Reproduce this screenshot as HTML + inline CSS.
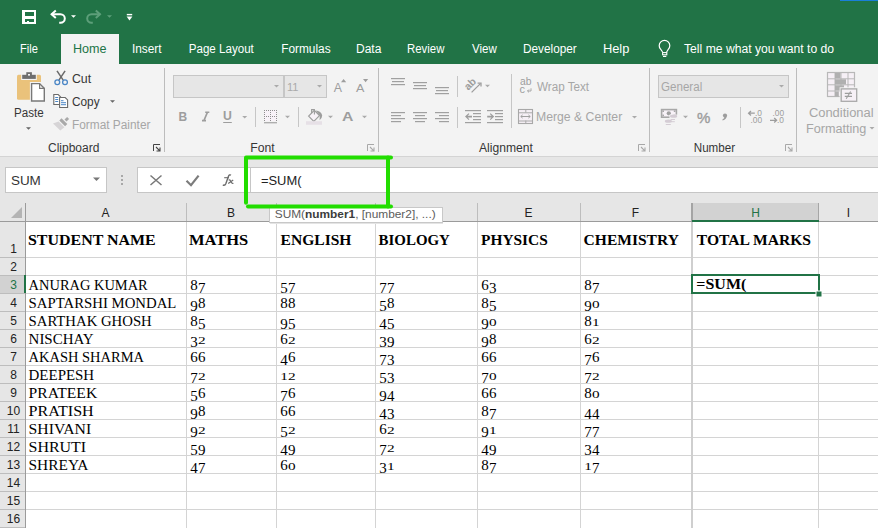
<!DOCTYPE html>
<html><head><meta charset="utf-8"><title>Excel</title>
<style>
*{margin:0;padding:0}
html,body{width:878px;height:528px;overflow:hidden;background:#e6e6e6;font-family:"Liberation Sans",sans-serif}
text{white-space:pre}
</style></head><body>
<svg width="878" height="528" viewBox="0 0 878 528" style="position:absolute;left:0;top:0">
<rect x="0" y="0" width="878" height="64" fill="#217346" />
<rect x="840" y="0" width="38" height="1" fill="#1a7fd8" />
<rect x="61" y="34" width="58" height="30" fill="#f3f3f3" />
<text id="tab_File" x="19.96" y="53" font-family='"Liberation Sans", sans-serif' font-size="12" fill="#ffffff" font-weight="normal" text-anchor="start" textLength="17.89" lengthAdjust="spacingAndGlyphs" >File</text>
<text id="tab_Home" x="72.93" y="53" font-family='"Liberation Sans", sans-serif' font-size="12" fill="#217346" font-weight="normal" text-anchor="start" textLength="33.56" lengthAdjust="spacingAndGlyphs" >Home</text>
<text id="tab_Insert" x="132.02" y="53" font-family='"Liberation Sans", sans-serif' font-size="12" fill="#ffffff" font-weight="normal" text-anchor="start" textLength="29.55" lengthAdjust="spacingAndGlyphs" >Insert</text>
<text id="tab_Page" x="188.78" y="53" font-family='"Liberation Sans", sans-serif' font-size="12" fill="#ffffff" font-weight="normal" text-anchor="start" textLength="65.02" lengthAdjust="spacingAndGlyphs" >Page Layout</text>
<text id="tab_Formulas" x="281.18" y="53" font-family='"Liberation Sans", sans-serif' font-size="12" fill="#ffffff" font-weight="normal" text-anchor="start" textLength="49.42" lengthAdjust="spacingAndGlyphs" >Formulas</text>
<text id="tab_Data" x="356.00" y="53" font-family='"Liberation Sans", sans-serif' font-size="12" fill="#ffffff" font-weight="normal" text-anchor="start" textLength="25.36" lengthAdjust="spacingAndGlyphs" >Data</text>
<text id="tab_Review" x="407.05" y="53" font-family='"Liberation Sans", sans-serif' font-size="12" fill="#ffffff" font-weight="normal" text-anchor="start" textLength="37.34" lengthAdjust="spacingAndGlyphs" >Review</text>
<text id="tab_View" x="472.00" y="53" font-family='"Liberation Sans", sans-serif' font-size="12" fill="#ffffff" font-weight="normal" text-anchor="start" textLength="24.80" lengthAdjust="spacingAndGlyphs" >View</text>
<text id="tab_Developer" x="523.02" y="53" font-family='"Liberation Sans", sans-serif' font-size="12" fill="#ffffff" font-weight="normal" text-anchor="start" textLength="53.69" lengthAdjust="spacingAndGlyphs" >Developer</text>
<text id="tab_Help" x="602.93" y="53" font-family='"Liberation Sans", sans-serif' font-size="12" fill="#ffffff" font-weight="normal" text-anchor="start" textLength="26.45" lengthAdjust="spacingAndGlyphs" >Help</text>
<text id="tab_Tell" x="684.00" y="53" font-family='"Liberation Sans", sans-serif' font-size="12" fill="#ffffff" font-weight="normal" text-anchor="start" textLength="150.08" lengthAdjust="spacingAndGlyphs" >Tell me what you want to do</text>
<rect x="22" y="10" width="14" height="14" fill="#ffffff" />
<rect x="25" y="12" width="9" height="4" fill="#217346" />
<rect x="25" y="19" width="9" height="3" fill="#217346" />
<rect x="27" y="21" width="2" height="1" fill="#ffffff" />
<path d="M51.5 14.2 H60.5 A4.3 4.3 0 0 1 60.5 22.8 H59.2" fill="none" stroke="#fff" stroke-width="2" />
<path d="M55.8 10.4 L51.6 14.2 L55.8 18" fill="none" stroke="#fff" stroke-width="2" />
<path d="M71 15.2H76L73.5 17.7Z" fill="#fff" />
<path d="M100.3 14.2 H91.5 A4.3 4.3 0 0 0 91.5 22.8 H92.8" fill="none" stroke="#5d9f7a" stroke-width="2" />
<path d="M95.8 10.4 L100 14.2 L95.8 18" fill="none" stroke="#5d9f7a" stroke-width="2" />
<path d="M107 15.2H112L109.5 17.7Z" fill="#5d9f7a" />
<rect x="126.8" y="13.9" width="5.4" height="1.4" fill="#fff" />
<path d="M126.6 16.4H132.4L129.5 20.4Z" fill="#fff" />
<path d="M662.6 52 L660.6 49.2 A5.3 5.3 0 1 1 668.4 49.2 L666.6 52" fill="none" stroke="#fff" stroke-width="1.2" />
<rect x="662.6" y="52.6" width="4.2" height="2.2" fill="none" stroke="#fff" stroke-width="1.1" />
<rect x="663" y="55.9" width="3.3" height="1.1" fill="#fff" />
<rect x="0" y="64" width="878" height="92" fill="#f3f3f3" />
<rect x="0" y="156" width="878" height="1" fill="#d4d4d4" />
<rect x="164" y="68" width="1" height="84" fill="#bcbcbc" />
<rect x="378" y="68" width="1" height="84" fill="#bcbcbc" />
<rect x="649" y="68" width="1" height="84" fill="#bcbcbc" />
<rect x="796" y="68" width="1" height="84" fill="#bcbcbc" />
<text id="g_clip" x="48.00" y="152" font-family='"Liberation Sans", sans-serif' font-size="12" fill="#363636" font-weight="normal" text-anchor="start" textLength="51.38" lengthAdjust="spacingAndGlyphs" >Clipboard</text>
<text id="g_font" x="250.34" y="152" font-family='"Liberation Sans", sans-serif' font-size="12" fill="#363636" font-weight="normal" text-anchor="start" textLength="24.38" lengthAdjust="spacingAndGlyphs" >Font</text>
<text id="g_align" x="479.00" y="152" font-family='"Liberation Sans", sans-serif' font-size="12" fill="#363636" font-weight="normal" text-anchor="start" textLength="53.88" lengthAdjust="spacingAndGlyphs" >Alignment</text>
<text id="g_num" x="693.79" y="152" font-family='"Liberation Sans", sans-serif' font-size="12" fill="#363636" font-weight="normal" text-anchor="start" textLength="41.30" lengthAdjust="spacingAndGlyphs" >Number</text>
<path d="M153.5 151V144.5H160" fill="none" stroke="#444" stroke-width="1" />
<path d="M156 147L159.8 150.8M160 147.5V151H156.5" fill="none" stroke="#444" stroke-width="1.1" />
<path d="M367.5 151V144.5H374" fill="none" stroke="#a8a8a8" stroke-width="1" />
<path d="M370 147L373.8 150.8M374 147.5V151H370.5" fill="none" stroke="#a8a8a8" stroke-width="1.1" />
<path d="M638.5 151V144.5H645" fill="none" stroke="#a8a8a8" stroke-width="1" />
<path d="M641 147L644.8 150.8M645 147.5V151H641.5" fill="none" stroke="#a8a8a8" stroke-width="1.1" />
<path d="M785.5 151V144.5H792" fill="none" stroke="#a8a8a8" stroke-width="1" />
<path d="M788 147L791.8 150.8M792 147.5V151H788.5" fill="none" stroke="#a8a8a8" stroke-width="1.1" />
<path d="M18.5 74.8H39.5Q41 74.8 41 76.3V98.3Q41 99.8 39.5 99.8H18.5Q17 99.8 17 98.3V76.3Q17 74.8 18.5 74.8Z" fill="#eac27b" />
<rect x="21.2" y="73.8" width="15.6" height="6.2" fill="#f3f3f3" />
<rect x="22.2" y="74.8" width="13.6" height="4.1" fill="#6e6e6e" />
<rect x="26.3" y="72.2" width="5.6" height="3" fill="#6e6e6e" />
<rect x="28" y="74" width="2" height="1.6" fill="#f3f3f3" />
<rect x="29.9" y="82" width="16.1" height="20.7" fill="#f3f3f3" />
<path d="M31.6 83.6H39.6L44.3 88.4V101H31.6Z" fill="#fff" stroke="#787878" stroke-width="1.4" />
<path d="M39.6 83.6V88.4H44.3" fill="none" stroke="#787878" stroke-width="1.2" />
<text id="paste" x="14.03" y="117" font-family='"Liberation Sans", sans-serif' font-size="12" fill="#363636" font-weight="normal" text-anchor="start" textLength="29.63" lengthAdjust="spacingAndGlyphs" >Paste</text>
<path d="M26 127.3H31L28.5 129.8Z" fill="#666" />
<path d="M57 70.8 L63.2 80.2 M65.1 70.8 L58.9 80.2" fill="none" stroke="#6a6a6a" stroke-width="1.5" />
<circle cx="57.3" cy="82.2" r="2.4" fill="none" stroke="#4a86c6" stroke-width="1.3"/>
<circle cx="65" cy="82.2" r="2.4" fill="none" stroke="#4a86c6" stroke-width="1.3"/>
<text id="cut" x="71.92" y="83" font-family='"Liberation Sans", sans-serif' font-size="12" fill="#363636" font-weight="normal" text-anchor="start" textLength="19.26" lengthAdjust="spacingAndGlyphs" >Cut</text>
<path d="M53.8 94.5H58.2L60.6 96.9V104.5H53.8Z" fill="#fff" stroke="#6a6a6a" stroke-width="1.1" />
<rect x="55.2" y="97" width="3" height="1" fill="#4a86c6" />
<rect x="55.2" y="99" width="3" height="1" fill="#4a86c6" />
<rect x="55.2" y="101" width="3" height="1" fill="#4a86c6" />
<path d="M59.6 97.5H65.2L67.6 99.9V107.5H59.6Z" fill="#fff" stroke="#6a6a6a" stroke-width="1.1" />
<rect x="61" y="100.2" width="2.5" height="1" fill="#4a86c6" />
<rect x="61" y="102.2" width="5" height="1" fill="#4a86c6" />
<rect x="61" y="104.2" width="5" height="1" fill="#4a86c6" />
<text id="copy" x="71.94" y="105.5" font-family='"Liberation Sans", sans-serif' font-size="12" fill="#363636" font-weight="normal" text-anchor="start" textLength="27.64" lengthAdjust="spacingAndGlyphs" >Copy</text>
<path d="M110 100.2H115L112.5 102.7Z" fill="#666" />
<path d="M67.1 117 L69.1 119 L66.5 121.6 L64.5 119.6 Z" fill="#a9a9a9" />
<path d="M59.3 120.4 L61.5 118.2 L67.3 124 L65.1 126.2 Z" fill="#a9a9a9" />
<path d="M53 123.4 L58.6 121.4 L64.4 127.2 L60.3 130.6 Z" fill="#d6d4d6" />
<text id="fp" x="72.01" y="128.6" font-family='"Liberation Sans", sans-serif' font-size="12" fill="#a6a6a6" font-weight="normal" text-anchor="start" textLength="78.42" lengthAdjust="spacingAndGlyphs" >Format Painter</text>
<rect x="173.5" y="75.5" width="110" height="22" fill="#e6e6e6" stroke="#c6c6c6" stroke-width="1" />
<rect x="283.5" y="75.5" width="43" height="22" fill="#e6e6e6" stroke="#c6c6c6" stroke-width="1" />
<rect x="283.5" y="76" width="1.5" height="21" fill="#c6c6c6" />
<path d="M274 85H279L276.5 87.5Z" fill="#aaa" />
<path d="M317 85H322L319.5 87.5Z" fill="#aaa" />
<text id="fsz" x="286.91" y="90.5" font-family='"Liberation Sans", sans-serif' font-size="11.5" fill="#aaa" font-weight="normal" text-anchor="start" textLength="11.52" lengthAdjust="spacingAndGlyphs" >11</text>
<text id="growA" x="333.82" y="92" font-family='"Liberation Sans", sans-serif' font-size="13.7" fill="#9d9d9d" font-weight="normal" text-anchor="start" textLength="8.24" lengthAdjust="spacingAndGlyphs" >A</text>
<path d="M341 82.2H346.2L343.6 79Z" fill="#9d9d9d" />
<text id="shrinkA" x="356.00" y="92" font-family='"Liberation Sans", sans-serif' font-size="11" fill="#9d9d9d" font-weight="normal" text-anchor="start" textLength="8.39" lengthAdjust="spacingAndGlyphs" >A</text>
<path d="M363 79H368.2L365.6 82.2Z" fill="#9d9d9d" />
<text id="boldB" x="178.56" y="121" font-family='"Liberation Sans", sans-serif' font-size="12.5" fill="#9d9d9d" font-weight="bold" text-anchor="start" textLength="8.67" lengthAdjust="spacingAndGlyphs" >B</text>
<path d="M205.2 112.2H209.3M202 120.6H206M207.4 112.4L204 120.4" fill="none" stroke="#9d9d9d" stroke-width="1.6" />
<text id="ulU" x="222.99" y="120.2" font-family='"Liberation Sans", sans-serif' font-size="12" fill="#9d9d9d" font-weight="bold" text-anchor="start" textLength="8.84" lengthAdjust="spacingAndGlyphs" >U</text>
<rect x="223.2" y="122" width="8.6" height="1" fill="#9d9d9d" />
<path d="M242.2 116H247.2L244.7 118.5Z" fill="#aaa" />
<rect x="255" y="107" width="1" height="20" fill="#c6c6c6" />
<rect x="264" y="110" width="13" height="11" fill="#f8f2f8" />
<rect x="264" y="110" width="1" height="1" fill="#8e8e8e" />
<rect x="264" y="112" width="1" height="1" fill="#8e8e8e" />
<rect x="264" y="114" width="1" height="1" fill="#8e8e8e" />
<rect x="264" y="116" width="1" height="1" fill="#8e8e8e" />
<rect x="264" y="118" width="1" height="1" fill="#8e8e8e" />
<rect x="264" y="120" width="1" height="1" fill="#8e8e8e" />
<rect x="266" y="110" width="1" height="1" fill="#8e8e8e" />
<rect x="266" y="116" width="1" height="1" fill="#8e8e8e" />
<rect x="268" y="110" width="1" height="1" fill="#8e8e8e" />
<rect x="268" y="116" width="1" height="1" fill="#8e8e8e" />
<rect x="270" y="110" width="1" height="1" fill="#8e8e8e" />
<rect x="270" y="112" width="1" height="1" fill="#8e8e8e" />
<rect x="270" y="114" width="1" height="1" fill="#8e8e8e" />
<rect x="270" y="116" width="1" height="1" fill="#8e8e8e" />
<rect x="270" y="118" width="1" height="1" fill="#8e8e8e" />
<rect x="270" y="120" width="1" height="1" fill="#8e8e8e" />
<rect x="272" y="110" width="1" height="1" fill="#8e8e8e" />
<rect x="272" y="116" width="1" height="1" fill="#8e8e8e" />
<rect x="274" y="110" width="1" height="1" fill="#8e8e8e" />
<rect x="274" y="116" width="1" height="1" fill="#8e8e8e" />
<rect x="276" y="110" width="1" height="1" fill="#8e8e8e" />
<rect x="276" y="112" width="1" height="1" fill="#8e8e8e" />
<rect x="276" y="114" width="1" height="1" fill="#8e8e8e" />
<rect x="276" y="116" width="1" height="1" fill="#8e8e8e" />
<rect x="276" y="118" width="1" height="1" fill="#8e8e8e" />
<rect x="276" y="120" width="1" height="1" fill="#8e8e8e" />
<rect x="264" y="122.2" width="13" height="1.1" fill="#9d9d9d" />
<path d="M285 115.8H290L287.5 118.3Z" fill="#aaa" />
<rect x="298" y="107" width="1" height="20" fill="#c6c6c6" />
<path d="M308.6 116.1 L314.3 110.4 L319.5 115.6 L313.8 121.3 Z" fill="#f8f2f8" stroke="#9d9d9d" stroke-width="1.2" />
<path d="M311.6 113.2 V109.6 H314.4 V114.6" fill="none" stroke="#9d9d9d" stroke-width="1.1" />
<path d="M315.6 110.6 Q321.3 111.2 322.2 115.4 Q322.2 118 319.6 120.2 L319.8 115.6 Z" fill="#9d9d9d" />
<rect x="306" y="121.2" width="16" height="3.6" fill="#e6e0e6" />
<path d="M328 115.8H333L330.5 118.3Z" fill="#aaa" />
<text id="fcA" x="341.96" y="121" font-family='"Liberation Sans", sans-serif' font-size="13.6" fill="#9d9d9d" font-weight="bold" text-anchor="start" textLength="11.40" lengthAdjust="spacingAndGlyphs" >A</text>
<path d="M362 115.8H367L364.5 118.3Z" fill="#aaa" />
<rect x="391" y="78" width="14" height="1.2" fill="#a0a0a0" />
<rect x="392" y="81" width="12" height="1.2" fill="#a0a0a0" />
<rect x="391" y="84" width="14" height="1.2" fill="#a0a0a0" />
<rect x="413" y="82" width="14" height="1.2" fill="#a0a0a0" />
<rect x="414" y="85" width="12" height="1.2" fill="#a0a0a0" />
<rect x="413" y="88" width="14" height="1.2" fill="#a0a0a0" />
<rect x="435" y="87" width="14" height="1.2" fill="#a0a0a0" />
<rect x="436" y="90" width="12" height="1.2" fill="#a0a0a0" />
<rect x="435" y="93" width="14" height="1.2" fill="#a0a0a0" />
<rect x="391" y="112" width="14" height="1.2" fill="#a0a0a0" />
<rect x="413" y="112" width="14" height="1.2" fill="#a0a0a0" />
<rect x="435" y="112" width="14" height="1.2" fill="#a0a0a0" />
<rect x="391" y="115" width="10" height="1.2" fill="#a0a0a0" />
<rect x="415" y="115" width="10" height="1.2" fill="#a0a0a0" />
<rect x="439" y="115" width="10" height="1.2" fill="#a0a0a0" />
<rect x="391" y="118" width="14" height="1.2" fill="#a0a0a0" />
<rect x="413" y="118" width="14" height="1.2" fill="#a0a0a0" />
<rect x="435" y="118" width="14" height="1.2" fill="#a0a0a0" />
<rect x="391" y="121" width="10" height="1.2" fill="#a0a0a0" />
<rect x="415" y="121" width="10" height="1.2" fill="#a0a0a0" />
<rect x="439" y="121" width="10" height="1.2" fill="#a0a0a0" />
<rect x="457" y="76" width="1" height="21" fill="#c6c6c6" />
<rect x="457" y="107" width="1" height="21" fill="#c6c6c6" />
<text x="0" y="0" font-family='"Liberation Sans", sans-serif' font-size="10.5" font-weight="bold" fill="#9d9d9d" transform="translate(468.2 90.8) rotate(-45)">ab</text>
<path d="M471.6 92.4 L480.4 83.6" fill="none" stroke="#9d9d9d" stroke-width="1.3" />
<path d="M477.6 83.1 H481 V86.4" fill="none" stroke="#9d9d9d" stroke-width="1.3" />
<path d="M485 84.8H490L487.5 87.3Z" fill="#aaa" />
<rect x="465" y="110" width="16" height="1.2" fill="#a0a0a0" />
<rect x="465" y="122" width="16" height="1.2" fill="#a0a0a0" />
<rect x="473" y="113" width="8" height="1.2" fill="#a0a0a0" />
<rect x="473" y="116" width="8" height="1.2" fill="#a0a0a0" />
<rect x="473" y="119" width="8" height="1.2" fill="#a0a0a0" />
<path d="M465 116.6 L468.6 113.2 L469.4 114 L467.6 115.7 H472 V117.5 H467.6 L469.4 119.2 L468.6 120 Z" fill="#9d9d9d" />
<rect x="487" y="110" width="16" height="1.2" fill="#a0a0a0" />
<rect x="487" y="122" width="16" height="1.2" fill="#a0a0a0" />
<rect x="495" y="113" width="8" height="1.2" fill="#a0a0a0" />
<rect x="495" y="116" width="8" height="1.2" fill="#a0a0a0" />
<rect x="495" y="119" width="8" height="1.2" fill="#a0a0a0" />
<path d="M494.2 116.6 L490.6 113.2 L489.8 114 L491.6 115.7 H487.2 V117.5 H491.6 L489.8 119.2 L490.6 120 Z" fill="#9d9d9d" />
<rect x="511" y="74" width="1" height="54" fill="#c6c6c6" />
<text id="t1" x="520.00" y="85.2" font-family='"Liberation Sans", sans-serif' font-size="10.3" fill="#9d9d9d" font-weight="normal" text-anchor="start" >ab</text>
<text id="t2" x="519.60" y="93" font-family='"Liberation Sans", sans-serif' font-size="11" fill="#9d9d9d" font-weight="normal" text-anchor="start" >c</text>
<path d="M531 88.3 V91 H527.5 M529 89.5 L527.5 91 L529 92.4" fill="none" stroke="#a0a0a0" stroke-width="0.9" />
<text id="wrap" x="537.00" y="90.7" font-family='"Liberation Sans", sans-serif' font-size="12" fill="#a6a6a6" font-weight="normal" text-anchor="start" textLength="52.09" lengthAdjust="spacingAndGlyphs" >Wrap Text</text>
<rect x="518.5" y="109.5" width="14" height="14" fill="#f6f0f6" stroke="#a8a8a8" stroke-width="1.1" />
<rect x="519" y="112.3" width="13" height="1" fill="#a8a8a8" />
<rect x="519" y="120.5" width="13" height="1" fill="#a8a8a8" />
<rect x="525.3" y="110" width="1" height="2.5" fill="#a8a8a8" />
<rect x="525.3" y="120.5" width="1" height="2.5" fill="#a8a8a8" />
<path d="M520.8 116.5 H530.2 M522.6 114.9 L520.8 116.5 L522.6 118.1 M528.4 114.9 L530.2 116.5 L528.4 118.1" fill="none" stroke="#a0a0a0" stroke-width="1" />
<text id="merge" x="535.98" y="121.3" font-family='"Liberation Sans", sans-serif' font-size="12" fill="#a6a6a6" font-weight="normal" text-anchor="start" textLength="86.27" lengthAdjust="spacingAndGlyphs" >Merge &amp; Center</text>
<path d="M632 116H637L634.5 118.5Z" fill="#aaa" />
<rect x="658.5" y="75.5" width="130" height="22" fill="#e6e6e6" stroke="#c6c6c6" stroke-width="1" />
<text id="general" x="661.04" y="90.5" font-family='"Liberation Sans", sans-serif' font-size="12" fill="#a6a6a6" font-weight="normal" text-anchor="start" textLength="41.19" lengthAdjust="spacingAndGlyphs" >General</text>
<path d="M779 85H784L781.5 87.5Z" fill="#aaa" />
<rect x="661.6" y="109.6" width="14.8" height="7.6" fill="#f8f2f8" stroke="#a8a8a8" stroke-width="1.6" />
<rect x="662.4000000000001" y="110.4" width="1.6" height="1.6" fill="#a8a8a8" />
<rect x="673.8000000000001" y="110.4" width="1.6" height="1.6" fill="#a8a8a8" />
<rect x="662.4000000000001" y="114.60000000000001" width="1.6" height="1.6" fill="#a8a8a8" />
<rect x="673.8000000000001" y="114.60000000000001" width="1.6" height="1.6" fill="#a8a8a8" />
<circle cx="668.8" cy="113.3" r="2.1" fill="#a0a0a0"/>
<rect x="669.5" y="114.6" width="8.5" height="10" fill="#f3f3f3" />
<ellipse cx="673.6" cy="116.2" rx="3.6" ry="1.6" fill="#d4ccd4"/>
<rect x="670.6" y="119" width="4.4" height="1" fill="#d4ccd4" />
<rect x="671.2" y="121.2" width="3.6" height="1" fill="#d4ccd4" />
<ellipse cx="668.4" cy="121.2" rx="3.6" ry="1.6" fill="#d4ccd4"/>
<rect x="665.8" y="124" width="5" height="1" fill="#d4ccd4" />
<path d="M683 115.8H688L685.5 118.3Z" fill="#aaa" />
<text id="pct" x="696.92" y="123" font-family='"Liberation Sans", sans-serif' font-size="15.5" fill="#9d9d9d" font-weight="normal" text-anchor="start" textLength="13.37" lengthAdjust="spacingAndGlyphs" stroke="#9d9d9d" stroke-width="0.4">%</text>
<circle cx="725" cy="115.6" r="2.1" fill="#9d9d9d"/>
<path d="M726.6 116.2 Q726.8 119 722.6 120.4 L722.4 119.6 Q724.6 118.6 724.6 116.6 Z" fill="#9d9d9d" />
<rect x="740" y="107" width="1" height="21" fill="#c6c6c6" />
<text id="t3" x="755.00" y="115.8" font-family='"Liberation Sans", sans-serif' font-size="8.4" fill="#9d9d9d" font-weight="normal" text-anchor="start" >.0</text>
<text id="t4" x="750.50" y="122.8" font-family='"Liberation Sans", sans-serif' font-size="8.4" fill="#9d9d9d" font-weight="normal" text-anchor="start" >.00</text>
<path d="M748.5 113.2 H754.8 M751 111 L748.6 113.2 L751 115.4" fill="none" stroke="#9d9d9d" stroke-width="1.3" />
<text id="t5" x="772.50" y="115.8" font-family='"Liberation Sans", sans-serif' font-size="8.4" fill="#9d9d9d" font-weight="normal" text-anchor="start" >.00</text>
<text id="t6" x="777.00" y="122.8" font-family='"Liberation Sans", sans-serif' font-size="8.4" fill="#9d9d9d" font-weight="normal" text-anchor="start" >.0</text>
<path d="M770 120.3 H776.5 M774.2 118.1 L776.6 120.3 L774.2 122.5" fill="none" stroke="#9d9d9d" stroke-width="1.3" />
<rect x="827.5" y="72.5" width="27" height="24" fill="#f6f0f6" stroke="#b8b8b8" stroke-width="1.2" />
<rect x="834.5" y="72.5" width="1" height="24.0" fill="#b8b8b8" />
<rect x="840.5" y="72.5" width="1" height="24.0" fill="#b8b8b8" />
<rect x="847.5" y="72.5" width="1" height="24.0" fill="#b8b8b8" />
<rect x="827.5" y="78.3" width="27.0" height="1" fill="#b8b8b8" />
<rect x="827.5" y="84.3" width="27.0" height="1" fill="#b8b8b8" />
<rect x="827.5" y="90.5" width="27.0" height="1" fill="#b8b8b8" />
<rect x="835" y="73" width="5.5" height="5.3" fill="#b0b0b0" />
<rect x="835" y="79.3" width="11" height="5" fill="#b0b0b0" />
<rect x="835" y="85.3" width="9" height="5.2" fill="#b0b0b0" />
<rect x="835" y="91.5" width="3.8" height="4.8" fill="#b0b0b0" />
<rect x="839.6" y="87.3" width="18.6" height="15.4" fill="#f3f3f3" />
<rect x="841.2" y="88.9" width="15.5" height="12.4" fill="#f6f0f6" stroke="#a8a8a8" stroke-width="1.3" />
<path d="M844.8 93.4 H852 M844.8 96.4 H852 M850.6 91.5 L846.2 98.7" fill="none" stroke="#9d9d9d" stroke-width="1.1" />
<text id="cond" x="808.92" y="116.7" font-family='"Liberation Sans", sans-serif' font-size="12" fill="#a6a6a6" font-weight="normal" text-anchor="start" textLength="64.68" lengthAdjust="spacingAndGlyphs" >Conditional</text>
<text id="fmtg" x="805.95" y="132.7" font-family='"Liberation Sans", sans-serif' font-size="12" fill="#a6a6a6" font-weight="normal" text-anchor="start" textLength="60.43" lengthAdjust="spacingAndGlyphs" >Formatting</text>
<path d="M869.5 127H874.5L872.0 129.5Z" fill="#aaa" />
<rect x="0" y="157" width="878" height="46" fill="#e6e6e6" />
<rect x="5.5" y="167.5" width="101" height="25" fill="#fff" stroke="#c6c6c6" stroke-width="1" />
<text id="namebox" x="10.92" y="184.7" font-family='"Liberation Sans", sans-serif' font-size="12.5" fill="#333" font-weight="normal" text-anchor="start" textLength="29.92" lengthAdjust="spacingAndGlyphs" >SUM</text>
<path d="M93 177.5H100L96.5 181.0Z" fill="#777" />
<rect x="121" y="175" width="2" height="2" fill="#a8a8a8" />
<rect x="121" y="179" width="2" height="2" fill="#a8a8a8" />
<rect x="121" y="183" width="2" height="2" fill="#a8a8a8" />
<rect x="137.5" y="167.5" width="114" height="25" fill="#fff" stroke="#c6c6c6" stroke-width="1" />
<path d="M150.5 175.5 L161.5 185 M161.5 175.5 L150.5 185" fill="none" stroke="#787878" stroke-width="1.5" />
<path d="M186.5 180.8 L191 185.2 L198.6 175.6" fill="none" stroke="#7c7c7c" stroke-width="2.2" />
<path d="M231 175.2 Q229.2 174.2 228.4 176.4 L225.8 183.8 Q225 185.8 222.8 185" fill="none" stroke="#6c6c6c" stroke-width="1.4" />
<path d="M224.2 177.7 H229" fill="none" stroke="#6c6c6c" stroke-width="1.1" />
<path d="M228.6 180 Q230 179.6 230.6 181 L231.4 182.6 Q232 183.8 233.4 183.2 M233.2 180 L228.2 183.6" fill="none" stroke="#6c6c6c" stroke-width="1.2" />
<rect x="250.5" y="167.5" width="640" height="25" fill="#fff" stroke="#c6c6c6" stroke-width="1" />
<text id="fx" x="260.96" y="184.5" font-family='"Liberation Sans", sans-serif' font-size="12.4" fill="#222" font-weight="normal" text-anchor="start" textLength="40.49" lengthAdjust="spacingAndGlyphs" >=SUM(</text>
<rect x="0" y="203" width="878" height="325" fill="#ffffff" />
<rect x="0" y="203" width="878" height="18" fill="#e6e6e6" />
<rect x="0" y="203" width="25" height="325" fill="#e6e6e6" />
<rect x="692" y="203" width="126" height="18" fill="#d2d2d2" />
<rect x="0" y="275" width="25" height="18" fill="#d2d2d2" />
<rect x="26" y="257" width="852" height="1" fill="#d4d4d4" />
<rect x="26" y="275" width="852" height="1" fill="#d4d4d4" />
<rect x="26" y="293" width="852" height="1" fill="#d4d4d4" />
<rect x="26" y="311" width="852" height="1" fill="#d4d4d4" />
<rect x="26" y="329" width="852" height="1" fill="#d4d4d4" />
<rect x="26" y="347" width="852" height="1" fill="#d4d4d4" />
<rect x="26" y="365" width="852" height="1" fill="#d4d4d4" />
<rect x="26" y="383" width="852" height="1" fill="#d4d4d4" />
<rect x="26" y="401" width="852" height="1" fill="#d4d4d4" />
<rect x="26" y="419" width="852" height="1" fill="#d4d4d4" />
<rect x="26" y="437" width="852" height="1" fill="#d4d4d4" />
<rect x="26" y="455" width="852" height="1" fill="#d4d4d4" />
<rect x="26" y="473" width="852" height="1" fill="#d4d4d4" />
<rect x="26" y="491" width="852" height="1" fill="#d4d4d4" />
<rect x="26" y="509" width="852" height="1" fill="#d4d4d4" />
<rect x="186" y="222" width="1" height="306" fill="#d4d4d4" />
<rect x="276" y="222" width="1" height="306" fill="#d4d4d4" />
<rect x="375" y="222" width="1" height="306" fill="#d4d4d4" />
<rect x="477" y="222" width="1" height="306" fill="#d4d4d4" />
<rect x="580" y="222" width="1" height="306" fill="#d4d4d4" />
<rect x="691" y="222" width="1" height="306" fill="#d4d4d4" />
<rect x="818" y="222" width="1" height="306" fill="#d4d4d4" />
<rect x="691" y="222" width="2" height="306" fill="#cfcfcf" />
<rect x="0" y="221" width="878" height="1" fill="#9b9b9b" />
<rect x="25" y="203" width="1" height="325" fill="#9b9b9b" />
<rect x="186" y="203" width="1" height="18" fill="#bdbdbd" />
<rect x="276" y="203" width="1" height="18" fill="#bdbdbd" />
<rect x="375" y="203" width="1" height="18" fill="#bdbdbd" />
<rect x="477" y="203" width="1" height="18" fill="#bdbdbd" />
<rect x="580" y="203" width="1" height="18" fill="#bdbdbd" />
<rect x="691" y="203" width="1" height="18" fill="#bdbdbd" />
<rect x="818" y="203" width="1" height="18" fill="#bdbdbd" />
<rect x="691" y="203" width="2" height="18" fill="#a4a4a4" />
<rect x="0" y="257" width="25" height="1" fill="#bdbdbd" />
<rect x="0" y="275" width="25" height="1" fill="#bdbdbd" />
<rect x="0" y="293" width="25" height="1" fill="#bdbdbd" />
<rect x="0" y="311" width="25" height="1" fill="#bdbdbd" />
<rect x="0" y="329" width="25" height="1" fill="#bdbdbd" />
<rect x="0" y="347" width="25" height="1" fill="#bdbdbd" />
<rect x="0" y="365" width="25" height="1" fill="#bdbdbd" />
<rect x="0" y="383" width="25" height="1" fill="#bdbdbd" />
<rect x="0" y="401" width="25" height="1" fill="#bdbdbd" />
<rect x="0" y="419" width="25" height="1" fill="#bdbdbd" />
<rect x="0" y="437" width="25" height="1" fill="#bdbdbd" />
<rect x="0" y="455" width="25" height="1" fill="#bdbdbd" />
<rect x="0" y="473" width="25" height="1" fill="#bdbdbd" />
<rect x="0" y="491" width="25" height="1" fill="#bdbdbd" />
<rect x="0" y="509" width="25" height="1" fill="#bdbdbd" />
<rect x="0" y="527" width="25" height="1" fill="#bdbdbd" />
<path d="M11 218 L22 218 L22 207 Z" fill="#b4b4b4" />
<text id="t7" x="105.50" y="217" font-family='"Liberation Sans", sans-serif' font-size="12" fill="#222" font-weight="normal" text-anchor="middle" >A</text>
<text id="t8" x="231.00" y="217" font-family='"Liberation Sans", sans-serif' font-size="12" fill="#222" font-weight="normal" text-anchor="middle" >B</text>
<text id="t9" x="325.50" y="217" font-family='"Liberation Sans", sans-serif' font-size="12" fill="#222" font-weight="normal" text-anchor="middle" >C</text>
<text id="t10" x="426.00" y="217" font-family='"Liberation Sans", sans-serif' font-size="12" fill="#222" font-weight="normal" text-anchor="middle" >D</text>
<text id="t11" x="528.50" y="217" font-family='"Liberation Sans", sans-serif' font-size="12" fill="#222" font-weight="normal" text-anchor="middle" >E</text>
<text id="t12" x="635.50" y="217" font-family='"Liberation Sans", sans-serif' font-size="12" fill="#222" font-weight="normal" text-anchor="middle" >F</text>
<text id="t13" x="755.50" y="217" font-family='"Liberation Sans", sans-serif' font-size="12" fill="#217346" font-weight="normal" text-anchor="middle" >H</text>
<text id="t14" x="848.50" y="217" font-family='"Liberation Sans", sans-serif' font-size="12" fill="#222" font-weight="normal" text-anchor="middle" >I</text>
<rect x="818" y="203" width="1" height="18" fill="#a6a6a6" />
<rect x="692" y="220" width="127" height="2" fill="#217346" />
<text id="t15" x="13.50" y="253" font-family='"Liberation Sans", sans-serif' font-size="12" fill="#222" font-weight="normal" text-anchor="middle" >1</text>
<text id="t16" x="13.50" y="271" font-family='"Liberation Sans", sans-serif' font-size="12" fill="#222" font-weight="normal" text-anchor="middle" >2</text>
<text id="t17" x="13.50" y="289" font-family='"Liberation Sans", sans-serif' font-size="12" fill="#217346" font-weight="normal" text-anchor="middle" >3</text>
<text id="t18" x="13.50" y="307" font-family='"Liberation Sans", sans-serif' font-size="12" fill="#222" font-weight="normal" text-anchor="middle" >4</text>
<text id="t19" x="13.50" y="325" font-family='"Liberation Sans", sans-serif' font-size="12" fill="#222" font-weight="normal" text-anchor="middle" >5</text>
<text id="t20" x="13.50" y="343" font-family='"Liberation Sans", sans-serif' font-size="12" fill="#222" font-weight="normal" text-anchor="middle" >6</text>
<text id="t21" x="13.50" y="361" font-family='"Liberation Sans", sans-serif' font-size="12" fill="#222" font-weight="normal" text-anchor="middle" >7</text>
<text id="t22" x="13.50" y="379" font-family='"Liberation Sans", sans-serif' font-size="12" fill="#222" font-weight="normal" text-anchor="middle" >8</text>
<text id="t23" x="13.50" y="397" font-family='"Liberation Sans", sans-serif' font-size="12" fill="#222" font-weight="normal" text-anchor="middle" >9</text>
<text id="t24" x="13.50" y="415" font-family='"Liberation Sans", sans-serif' font-size="12" fill="#222" font-weight="normal" text-anchor="middle" >10</text>
<text id="t25" x="13.50" y="433" font-family='"Liberation Sans", sans-serif' font-size="12" fill="#222" font-weight="normal" text-anchor="middle" >11</text>
<text id="t26" x="13.50" y="451" font-family='"Liberation Sans", sans-serif' font-size="12" fill="#222" font-weight="normal" text-anchor="middle" >12</text>
<text id="t27" x="13.50" y="469" font-family='"Liberation Sans", sans-serif' font-size="12" fill="#222" font-weight="normal" text-anchor="middle" >13</text>
<text id="t28" x="13.50" y="487" font-family='"Liberation Sans", sans-serif' font-size="12" fill="#222" font-weight="normal" text-anchor="middle" >14</text>
<text id="t29" x="13.50" y="505" font-family='"Liberation Sans", sans-serif' font-size="12" fill="#222" font-weight="normal" text-anchor="middle" >15</text>
<text id="t30" x="13.50" y="523" font-family='"Liberation Sans", sans-serif' font-size="12" fill="#222" font-weight="normal" text-anchor="middle" >16</text>
<rect x="24" y="275" width="2" height="18" fill="#217346" />
<text id="h_STUDENT" x="27.96" y="244.8" font-family='"Liberation Serif", serif' font-size="14.8" fill="#000" font-weight="bold" text-anchor="start" textLength="127.77" lengthAdjust="spacingAndGlyphs" >STUDENT NAME</text>
<text id="h_MATHS" x="188.98" y="244.8" font-family='"Liberation Serif", serif' font-size="14.8" fill="#000" font-weight="bold" text-anchor="start" textLength="59.31" lengthAdjust="spacingAndGlyphs" >MATHS</text>
<text id="h_ENGLISH" x="280.60" y="244.8" font-family='"Liberation Serif", serif' font-size="14.8" fill="#000" font-weight="bold" text-anchor="start" textLength="70.83" lengthAdjust="spacingAndGlyphs" >ENGLISH</text>
<text id="h_BIOLOGY" x="378.60" y="244.8" font-family='"Liberation Serif", serif' font-size="14.8" fill="#000" font-weight="bold" text-anchor="start" textLength="71.27" lengthAdjust="spacingAndGlyphs" >BIOLOGY</text>
<text id="h_PHYSICS" x="481.00" y="244.8" font-family='"Liberation Serif", serif' font-size="14.8" fill="#000" font-weight="bold" text-anchor="start" textLength="66.74" lengthAdjust="spacingAndGlyphs" >PHYSICS</text>
<text id="h_CHEMISTRY" x="583.58" y="244.8" font-family='"Liberation Serif", serif' font-size="14.8" fill="#000" font-weight="bold" text-anchor="start" textLength="95.28" lengthAdjust="spacingAndGlyphs" >CHEMISTRY</text>
<text id="h_TOTAL" x="696.79" y="244.8" font-family='"Liberation Serif", serif' font-size="14.8" fill="#000" font-weight="bold" text-anchor="start" textLength="114.21" lengthAdjust="spacingAndGlyphs" >TOTAL MARKS</text>
<text id="n0" x="28.61" y="290" font-family='"Liberation Serif", serif' font-size="14.9" fill="#000" font-weight="normal" text-anchor="start" textLength="119.13" lengthAdjust="spacingAndGlyphs" >ANURAG KUMAR</text>
<text x="190.20" y="290" font-family='"Liberation Serif", serif' font-size="15" fill="#000">8</text>
<text x="198.10" y="293" font-family='"Liberation Serif", serif' font-size="15" fill="#000">7</text>
<text x="280.20" y="293" font-family='"Liberation Serif", serif' font-size="15" fill="#000">5</text>
<text x="288.10" y="293" font-family='"Liberation Serif", serif' font-size="15" fill="#000">7</text>
<text x="379.20" y="293" font-family='"Liberation Serif", serif' font-size="15" fill="#000">7</text>
<text x="387.10" y="293" font-family='"Liberation Serif", serif' font-size="15" fill="#000">7</text>
<text x="481.20" y="290" font-family='"Liberation Serif", serif' font-size="15" fill="#000">6</text>
<text x="489.10" y="293" font-family='"Liberation Serif", serif' font-size="15" fill="#000">3</text>
<text x="584.20" y="290" font-family='"Liberation Serif", serif' font-size="15" fill="#000">8</text>
<text x="592.10" y="293" font-family='"Liberation Serif", serif' font-size="15" fill="#000">7</text>
<text id="n1" x="28.60" y="308" font-family='"Liberation Serif", serif' font-size="14.9" fill="#000" font-weight="normal" text-anchor="start" textLength="147.73" lengthAdjust="spacingAndGlyphs" >SAPTARSHI MONDAL</text>
<text x="190.20" y="311" font-family='"Liberation Serif", serif' font-size="15" fill="#000">9</text>
<text x="198.10" y="308" font-family='"Liberation Serif", serif' font-size="15" fill="#000">8</text>
<text x="280.20" y="308" font-family='"Liberation Serif", serif' font-size="15" fill="#000">8</text>
<text x="288.10" y="308" font-family='"Liberation Serif", serif' font-size="15" fill="#000">8</text>
<text x="379.20" y="311" font-family='"Liberation Serif", serif' font-size="15" fill="#000">5</text>
<text x="387.10" y="308" font-family='"Liberation Serif", serif' font-size="15" fill="#000">8</text>
<text x="481.20" y="308" font-family='"Liberation Serif", serif' font-size="15" fill="#000">8</text>
<text x="489.10" y="311" font-family='"Liberation Serif", serif' font-size="15" fill="#000">5</text>
<text x="584.20" y="311" font-family='"Liberation Serif", serif' font-size="15" fill="#000">9</text>
<text transform="translate(592.10 308) scale(1.02 0.69)" x="0" y="0" font-family='"Liberation Serif", serif' font-size="15" fill="#000">0</text>
<text id="n2" x="28.58" y="326" font-family='"Liberation Serif", serif' font-size="14.9" fill="#000" font-weight="normal" text-anchor="start" textLength="123.17" lengthAdjust="spacingAndGlyphs" >SARTHAK GHOSH</text>
<text x="190.20" y="326" font-family='"Liberation Serif", serif' font-size="15" fill="#000">8</text>
<text x="198.10" y="329" font-family='"Liberation Serif", serif' font-size="15" fill="#000">5</text>
<text x="280.20" y="329" font-family='"Liberation Serif", serif' font-size="15" fill="#000">9</text>
<text x="288.10" y="329" font-family='"Liberation Serif", serif' font-size="15" fill="#000">5</text>
<text x="379.20" y="329" font-family='"Liberation Serif", serif' font-size="15" fill="#000">4</text>
<text x="387.10" y="329" font-family='"Liberation Serif", serif' font-size="15" fill="#000">5</text>
<text x="481.20" y="329" font-family='"Liberation Serif", serif' font-size="15" fill="#000">9</text>
<text transform="translate(489.10 326) scale(1.02 0.69)" x="0" y="0" font-family='"Liberation Serif", serif' font-size="15" fill="#000">0</text>
<text x="584.20" y="326" font-family='"Liberation Serif", serif' font-size="15" fill="#000">8</text>
<text transform="translate(592.10 326) scale(1.02 0.69)" x="0" y="0" font-family='"Liberation Serif", serif' font-size="15" fill="#000">1</text>
<text id="n3" x="28.58" y="344" font-family='"Liberation Serif", serif' font-size="14.9" fill="#000" font-weight="normal" text-anchor="start" textLength="65.09" lengthAdjust="spacingAndGlyphs" >NISCHAY</text>
<text x="190.20" y="347" font-family='"Liberation Serif", serif' font-size="15" fill="#000">3</text>
<text transform="translate(198.10 344) scale(1.02 0.69)" x="0" y="0" font-family='"Liberation Serif", serif' font-size="15" fill="#000">2</text>
<text x="280.20" y="344" font-family='"Liberation Serif", serif' font-size="15" fill="#000">6</text>
<text transform="translate(288.10 344) scale(1.02 0.69)" x="0" y="0" font-family='"Liberation Serif", serif' font-size="15" fill="#000">2</text>
<text x="379.20" y="347" font-family='"Liberation Serif", serif' font-size="15" fill="#000">3</text>
<text x="387.10" y="347" font-family='"Liberation Serif", serif' font-size="15" fill="#000">9</text>
<text x="481.20" y="347" font-family='"Liberation Serif", serif' font-size="15" fill="#000">9</text>
<text x="489.10" y="344" font-family='"Liberation Serif", serif' font-size="15" fill="#000">8</text>
<text x="584.20" y="344" font-family='"Liberation Serif", serif' font-size="15" fill="#000">6</text>
<text transform="translate(592.10 344) scale(1.02 0.69)" x="0" y="0" font-family='"Liberation Serif", serif' font-size="15" fill="#000">2</text>
<text id="n4" x="28.59" y="362" font-family='"Liberation Serif", serif' font-size="14.9" fill="#000" font-weight="normal" text-anchor="start" textLength="115.42" lengthAdjust="spacingAndGlyphs" >AKASH SHARMA</text>
<text x="190.20" y="362" font-family='"Liberation Serif", serif' font-size="15" fill="#000">6</text>
<text x="198.10" y="362" font-family='"Liberation Serif", serif' font-size="15" fill="#000">6</text>
<text x="280.20" y="365" font-family='"Liberation Serif", serif' font-size="15" fill="#000">4</text>
<text x="288.10" y="362" font-family='"Liberation Serif", serif' font-size="15" fill="#000">6</text>
<text x="379.20" y="365" font-family='"Liberation Serif", serif' font-size="15" fill="#000">7</text>
<text x="387.10" y="365" font-family='"Liberation Serif", serif' font-size="15" fill="#000">3</text>
<text x="481.20" y="362" font-family='"Liberation Serif", serif' font-size="15" fill="#000">6</text>
<text x="489.10" y="362" font-family='"Liberation Serif", serif' font-size="15" fill="#000">6</text>
<text x="584.20" y="365" font-family='"Liberation Serif", serif' font-size="15" fill="#000">7</text>
<text x="592.10" y="362" font-family='"Liberation Serif", serif' font-size="15" fill="#000">6</text>
<text id="n5" x="28.58" y="380" font-family='"Liberation Serif", serif' font-size="14.9" fill="#000" font-weight="normal" text-anchor="start" textLength="65.59" lengthAdjust="spacingAndGlyphs" >DEEPESH</text>
<text x="190.20" y="383" font-family='"Liberation Serif", serif' font-size="15" fill="#000">7</text>
<text transform="translate(198.10 380) scale(1.02 0.69)" x="0" y="0" font-family='"Liberation Serif", serif' font-size="15" fill="#000">2</text>
<text transform="translate(280.20 380) scale(1.02 0.69)" x="0" y="0" font-family='"Liberation Serif", serif' font-size="15" fill="#000">1</text>
<text transform="translate(288.10 380) scale(1.02 0.69)" x="0" y="0" font-family='"Liberation Serif", serif' font-size="15" fill="#000">2</text>
<text x="379.20" y="383" font-family='"Liberation Serif", serif' font-size="15" fill="#000">5</text>
<text x="387.10" y="383" font-family='"Liberation Serif", serif' font-size="15" fill="#000">3</text>
<text x="481.20" y="383" font-family='"Liberation Serif", serif' font-size="15" fill="#000">7</text>
<text transform="translate(489.10 380) scale(1.02 0.69)" x="0" y="0" font-family='"Liberation Serif", serif' font-size="15" fill="#000">0</text>
<text x="584.20" y="383" font-family='"Liberation Serif", serif' font-size="15" fill="#000">7</text>
<text transform="translate(592.10 380) scale(1.02 0.69)" x="0" y="0" font-family='"Liberation Serif", serif' font-size="15" fill="#000">2</text>
<text id="n6" x="28.58" y="398" font-family='"Liberation Serif", serif' font-size="14.9" fill="#000" font-weight="normal" text-anchor="start" textLength="68.64" lengthAdjust="spacingAndGlyphs" >PRATEEK</text>
<text x="190.20" y="401" font-family='"Liberation Serif", serif' font-size="15" fill="#000">5</text>
<text x="198.10" y="398" font-family='"Liberation Serif", serif' font-size="15" fill="#000">6</text>
<text x="280.20" y="401" font-family='"Liberation Serif", serif' font-size="15" fill="#000">7</text>
<text x="288.10" y="398" font-family='"Liberation Serif", serif' font-size="15" fill="#000">6</text>
<text x="379.20" y="401" font-family='"Liberation Serif", serif' font-size="15" fill="#000">9</text>
<text x="387.10" y="401" font-family='"Liberation Serif", serif' font-size="15" fill="#000">4</text>
<text x="481.20" y="398" font-family='"Liberation Serif", serif' font-size="15" fill="#000">6</text>
<text x="489.10" y="398" font-family='"Liberation Serif", serif' font-size="15" fill="#000">6</text>
<text x="584.20" y="398" font-family='"Liberation Serif", serif' font-size="15" fill="#000">8</text>
<text transform="translate(592.10 398) scale(1.02 0.69)" x="0" y="0" font-family='"Liberation Serif", serif' font-size="15" fill="#000">0</text>
<text id="n7" x="28.51" y="416" font-family='"Liberation Serif", serif' font-size="14.9" fill="#000" font-weight="normal" text-anchor="start" textLength="65.21" lengthAdjust="spacingAndGlyphs" >PRATISH</text>
<text x="190.20" y="419" font-family='"Liberation Serif", serif' font-size="15" fill="#000">9</text>
<text x="198.10" y="416" font-family='"Liberation Serif", serif' font-size="15" fill="#000">8</text>
<text x="280.20" y="416" font-family='"Liberation Serif", serif' font-size="15" fill="#000">6</text>
<text x="288.10" y="416" font-family='"Liberation Serif", serif' font-size="15" fill="#000">6</text>
<text x="379.20" y="419" font-family='"Liberation Serif", serif' font-size="15" fill="#000">4</text>
<text x="387.10" y="419" font-family='"Liberation Serif", serif' font-size="15" fill="#000">3</text>
<text x="481.20" y="416" font-family='"Liberation Serif", serif' font-size="15" fill="#000">8</text>
<text x="489.10" y="419" font-family='"Liberation Serif", serif' font-size="15" fill="#000">7</text>
<text x="584.20" y="419" font-family='"Liberation Serif", serif' font-size="15" fill="#000">4</text>
<text x="592.10" y="419" font-family='"Liberation Serif", serif' font-size="15" fill="#000">4</text>
<text id="n8" x="28.57" y="434" font-family='"Liberation Serif", serif' font-size="14.9" fill="#000" font-weight="normal" text-anchor="start" textLength="62.61" lengthAdjust="spacingAndGlyphs" >SHIVANI</text>
<text x="190.20" y="437" font-family='"Liberation Serif", serif' font-size="15" fill="#000">9</text>
<text transform="translate(198.10 434) scale(1.02 0.69)" x="0" y="0" font-family='"Liberation Serif", serif' font-size="15" fill="#000">2</text>
<text x="280.20" y="437" font-family='"Liberation Serif", serif' font-size="15" fill="#000">5</text>
<text transform="translate(288.10 434) scale(1.02 0.69)" x="0" y="0" font-family='"Liberation Serif", serif' font-size="15" fill="#000">2</text>
<text x="379.20" y="434" font-family='"Liberation Serif", serif' font-size="15" fill="#000">6</text>
<text transform="translate(387.10 434) scale(1.02 0.69)" x="0" y="0" font-family='"Liberation Serif", serif' font-size="15" fill="#000">2</text>
<text x="481.20" y="437" font-family='"Liberation Serif", serif' font-size="15" fill="#000">9</text>
<text transform="translate(489.10 434) scale(1.02 0.69)" x="0" y="0" font-family='"Liberation Serif", serif' font-size="15" fill="#000">1</text>
<text x="584.20" y="437" font-family='"Liberation Serif", serif' font-size="15" fill="#000">7</text>
<text x="592.10" y="437" font-family='"Liberation Serif", serif' font-size="15" fill="#000">7</text>
<text id="n9" x="28.53" y="452" font-family='"Liberation Serif", serif' font-size="14.9" fill="#000" font-weight="normal" text-anchor="start" textLength="57.63" lengthAdjust="spacingAndGlyphs" >SHRUTI</text>
<text x="190.20" y="455" font-family='"Liberation Serif", serif' font-size="15" fill="#000">5</text>
<text x="198.10" y="455" font-family='"Liberation Serif", serif' font-size="15" fill="#000">9</text>
<text x="280.20" y="455" font-family='"Liberation Serif", serif' font-size="15" fill="#000">4</text>
<text x="288.10" y="455" font-family='"Liberation Serif", serif' font-size="15" fill="#000">9</text>
<text x="379.20" y="455" font-family='"Liberation Serif", serif' font-size="15" fill="#000">7</text>
<text transform="translate(387.10 452) scale(1.02 0.69)" x="0" y="0" font-family='"Liberation Serif", serif' font-size="15" fill="#000">2</text>
<text x="481.20" y="455" font-family='"Liberation Serif", serif' font-size="15" fill="#000">4</text>
<text x="489.10" y="455" font-family='"Liberation Serif", serif' font-size="15" fill="#000">9</text>
<text x="584.20" y="455" font-family='"Liberation Serif", serif' font-size="15" fill="#000">3</text>
<text x="592.10" y="455" font-family='"Liberation Serif", serif' font-size="15" fill="#000">4</text>
<text id="n10" x="28.55" y="470" font-family='"Liberation Serif", serif' font-size="14.9" fill="#000" font-weight="normal" text-anchor="start" textLength="59.90" lengthAdjust="spacingAndGlyphs" >SHREYA</text>
<text x="190.20" y="473" font-family='"Liberation Serif", serif' font-size="15" fill="#000">4</text>
<text x="198.10" y="473" font-family='"Liberation Serif", serif' font-size="15" fill="#000">7</text>
<text x="280.20" y="470" font-family='"Liberation Serif", serif' font-size="15" fill="#000">6</text>
<text transform="translate(288.10 470) scale(1.02 0.69)" x="0" y="0" font-family='"Liberation Serif", serif' font-size="15" fill="#000">0</text>
<text x="379.20" y="473" font-family='"Liberation Serif", serif' font-size="15" fill="#000">3</text>
<text transform="translate(387.10 470) scale(1.02 0.69)" x="0" y="0" font-family='"Liberation Serif", serif' font-size="15" fill="#000">1</text>
<text x="481.20" y="470" font-family='"Liberation Serif", serif' font-size="15" fill="#000">8</text>
<text x="489.10" y="473" font-family='"Liberation Serif", serif' font-size="15" fill="#000">7</text>
<text transform="translate(584.20 470) scale(1.02 0.69)" x="0" y="0" font-family='"Liberation Serif", serif' font-size="15" fill="#000">1</text>
<text x="592.10" y="473" font-family='"Liberation Serif", serif' font-size="15" fill="#000">7</text>
<rect x="692" y="275" width="127" height="18" fill="none" stroke="#217346" stroke-width="2"/>
<rect x="815.5" y="290.5" width="7" height="7" fill="#fff" />
<rect x="816.5" y="291.5" width="5" height="5" fill="#217346" />
<text id="cellfx" x="696.37" y="288.8" font-family='"Liberation Serif", serif' font-size="15.5" fill="#000" font-weight="bold" text-anchor="start" textLength="49.97" lengthAdjust="spacingAndGlyphs" >=SUM(</text>
<rect x="269.5" y="207.5" width="173" height="15" fill="#fff" stroke="#c8c8c8" stroke-width="1" />
<rect x="270" y="223" width="173" height="1" fill="#e4e4e4" />
<text id="tip" x="274.75" y="218" font-family='"Liberation Sans", sans-serif' font-size="11" fill="#5c5c5c" font-weight="normal" text-anchor="start" textLength="160.90" lengthAdjust="spacingAndGlyphs" >SUM(<tspan font-weight="bold" fill="#3c3c3c">number1</tspan>, [number2], ...)</text>
<path d="M246 202.7 V157.4 H391" fill="none" stroke="#22dd00" stroke-width="4" stroke-linejoin="round" stroke-linecap="round"/>
<path d="M388 157.4 V206.4" fill="none" stroke="#22dd00" stroke-width="4" stroke-linejoin="round" stroke-linecap="round"/>
<path d="M248 206.4 H391" fill="none" stroke="#22dd00" stroke-width="4" stroke-linejoin="round" stroke-linecap="round"/>
</svg>
</body></html>
